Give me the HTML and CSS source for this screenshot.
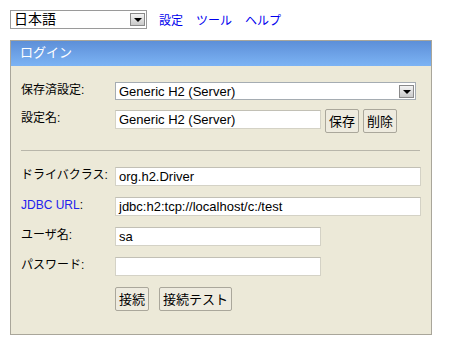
FILE: index.html
```html
<!DOCTYPE html>
<html lang="ja">
<head>
    <meta charset="UTF-8">
    <title>H2 Console</title>
    <link rel="stylesheet" href="styles.css">
</head>
<body>
<div class="toolbar">
    <div class="select lang-select">
        <span class="select-value">日本語</span>
        <span class="select-arrow"></span>
    </div>
    <a href="#" class="tool-link">設定</a>
    <a href="#" class="tool-link">ツール</a>
    <a href="#" class="tool-link">ヘルプ</a>
</div>

<div class="login">
    <div class="login-title">ログイン</div>
    <div class="login-body">
        <div class="row row-saved">
            <div class="label">保存済設定:</div>
            <div class="select wide">
                <span class="select-value">Generic H2 (Server)</span>
                <span class="select-arrow"></span>
            </div>
        </div>
        <div class="row row-name">
            <div class="label">設定名:</div>
            <div class="field short">Generic H2 (Server)</div>
            <button class="btn">保存</button>
            <button class="btn">削除</button>
        </div>

        <hr class="sep">

        <div class="row">
            <div class="label">ドライバクラス:</div>
            <div class="field wide">org.h2.Driver</div>
        </div>
        <div class="row">
            <div class="label"><a href="#" class="label-link">JDBC URL</a>:</div>
            <div class="field wide">jdbc:h2:tcp://localhost/c:/test</div>
        </div>
        <div class="row">
            <div class="label">ユーザ名:</div>
            <div class="field short">sa</div>
        </div>
        <div class="row">
            <div class="label">パスワード:</div>
            <div class="field short"></div>
        </div>
        <div class="row row-actions">
            <div class="label"></div>
            <button class="btn">接続</button>
            <button class="btn btn-test">接続テスト</button>
        </div>
    </div>
</div>
</body>
</html>
```

FILE: styles.css
```css
body {
    margin: 0;
    font-family: "Liberation Sans", "Noto Sans CJK JP", sans-serif;
    font-size: 13px;
    color: #000;
    background: #fff;
}

.toolbar {
    display: flex;
    align-items: center;
    padding: 10px 0 0 10px;
    height: 19px;
}

.tool-link {
    color: #0000ee;
    text-decoration: none;
    font-size: 12px;
    margin-right: 13px;
}

.select {
    display: flex;
    align-items: center;
    box-sizing: border-box;
    background: #fff;
    border: 1px solid #a5acb2;
}

.lang-select {
    width: 137px;
    height: 19px;
    margin-right: 12px;
    border-color: #9a9a9a;
    font-size: 14px;
}

.select-value {
    flex: 1;
    padding-left: 3px;
    white-space: nowrap;
    line-height: 15px;
}

.select-arrow {
    width: 15px;
    height: 13px;
    margin-right: 1px;
    box-sizing: border-box;
    border: 1px solid #8a8a8a;
    background: linear-gradient(#f4f4f4, #c9c9c9);
    position: relative;
}

.select-arrow::after {
    content: '';
    position: absolute;
    left: 3px;
    top: 4px;
    border-left: 4px solid transparent;
    border-right: 4px solid transparent;
    border-top: 4px solid #000;
}

.login {
    margin: 11px 0 0 10px;
    width: 422px;
    box-sizing: border-box;
    border: 1px solid #a9a69a;
    background: #ece9d8;
}

.login-title {
    height: 25px;
    line-height: 23px;
    padding-left: 9px;
    color: #fff;
    background: linear-gradient(#5d8fd8, #7cb3f4);
}

.login-body {
    padding: 16px 0 23px 10px;
}

.row {
    display: flex;
    align-items: flex-start;
    margin-bottom: 11px;
}

.row-saved {
    margin-bottom: 9px;
}

.row-name {
    margin-bottom: 0;
}

.label {
    width: 94px;
    flex-shrink: 0;
    font-size: 12px;
    line-height: 15px;
    padding-top: 1px;
}

.label-link {
    color: #2222ee;
    text-decoration: none;
}

.select.wide {
    width: 301px;
    height: 18px;
}

.field {
    box-sizing: border-box;
    height: 19px;
    line-height: 17px;
    padding-left: 3px;
    background: #fff;
    border: 1px solid #d4d2c6;
    border-top-color: #c2c0b5;
    white-space: nowrap;
}

.row-name .field {
    margin-top: 1px;
}

.row-name .label {
    padding-top: 2px;
}

.field.short {
    width: 206px;
}

.field.wide {
    width: 306px;
}

.btn {
    height: 24px;
    padding: 0 3px;
    margin-left: 4px;
    font-family: inherit;
    font-size: 13px;
    line-height: 15px;
    color: #000;
    background: #eeebdf;
    border: 1px solid #aaa79b;
    border-radius: 2px;
}

.row-actions {
    margin-top: 10px;
    margin-bottom: 0;
}

.row-actions .btn {
    margin-left: 0;
    margin-right: 10px;
}

.sep {
    margin: 17px 11px 16px 0;
    border: 0;
    border-top: 1px solid #b8b6aa;
    height: 0;
}
```
